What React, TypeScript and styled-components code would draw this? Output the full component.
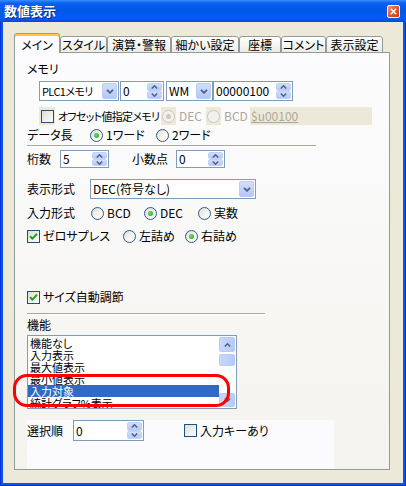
import styled, { createGlobalStyle } from "styled-components";

const GlobalStyle = createGlobalStyle`
  html, body {
    margin: 0;
    padding: 0;
    background: #ece9d8;
  }
  body {
    font-family: "Noto Sans CJK JP", sans-serif;
    font-size: 12px;
    color: #000;
    font-feature-settings: "palt";
  }
`;

const Window = styled.div`
  width: 406px;
  height: 486px;
  box-sizing: border-box;
  display: flex;
  flex-direction: column;
  background: #0757e8;
  border-left: 1px solid #0831d9;
  border-right: 1px solid #0031b5;
  border-bottom: 1px solid #0031b5;
`;

const TitleBar = styled.div`
  height: 22px;
  flex: none;
  margin: 0 -1px;
  display: flex;
  align-items: center;
  justify-content: space-between;
  padding: 0 6px 0 4px;
  background: linear-gradient(
    to bottom,
    #3d8dff 0,
    #0a62f0 3px,
    #0056e8 45%,
    #005cf2 85%,
    #0049d6 100%
  );
`;

const Title = styled.span`
  color: #fff;
  font-weight: bold;
  font-size: 13px;
  line-height: 14px;
  text-shadow: 1px 1px 0 #0a2a8a;
`;

const CloseButton = styled.div`
  width: 13px;
  height: 13px;
  box-sizing: border-box;
  border: 1px solid #fff;
  border-radius: 2px;
  background: linear-gradient(135deg, #f19a7e 0%, #e35a32 45%, #c73a13 100%);
  display: flex;
  align-items: center;
  justify-content: center;
`;

const Body = styled.div`
  flex: 1;
  margin: 0 2px 2px;
  background: #ece9d8;
  padding: 11px 13px 0 11px;
  display: flex;
  flex-direction: column;
`;

const TabBar = styled.div`
  display: flex;
  align-items: flex-end;
  height: 20px;
  margin-bottom: -1px;
  position: relative;
  z-index: 1;
`;

const Tab = styled.div<{ $w: number; $active?: boolean }>`
  width: ${({ $w }) => $w}px;
  height: ${({ $active }) => ($active ? 20 : 17)}px;
  box-sizing: border-box;
  flex: none;
  border: 1px solid #919b9c;
  border-bottom: ${({ $active }) => ($active ? "none" : "1px solid #919b9c")};
  border-top-color: ${({ $active }) => ($active ? "#e68b2c" : "#919b9c")};
  border-radius: 3px 3px 0 0;
  background: ${({ $active }) =>
    $active ? "#fcfcfe" : "linear-gradient(#ffffff, #ecebe6)"};
  box-shadow: ${({ $active }) => ($active ? "inset 0 2px 0 #ffc83c" : "none")};
  display: flex;
  align-items: center;
  justify-content: center;
  padding-top: ${({ $active }) => ($active ? 2 : 0)}px;
  white-space: nowrap;
  line-height: 14px;
`;

const Panel = styled.div`
  width: 376px;
  height: 418px;
  box-sizing: border-box;
  border: 1px solid #919b9c;
  background: linear-gradient(#fcfcfe, #f4f3ee);
  padding-left: 12px;
  display: flex;
  flex-direction: column;
  position: relative;
`;

const Row = styled.div<{ $mt: number; $h: number; $indent?: number }>`
  display: flex;
  align-items: center;
  flex: none;
  margin-top: ${({ $mt }) => $mt}px;
  height: ${({ $h }) => $h}px;
  padding-left: ${({ $indent }) => $indent ?? 0}px;
  line-height: 14px;
  white-space: nowrap;
`;

const Label = styled.span<{ $w?: number; $ml?: number }>`
  flex: none;
  width: ${({ $w }) => ($w ? `${$w}px` : "auto")};
  margin-left: ${({ $ml }) => $ml ?? 0}px;
`;

const Narrow = styled.span<{ $fs?: number; $ls: number }>`
  font-size: ${({ $fs }) => $fs ?? 12}px;
  letter-spacing: ${({ $ls }) => $ls}px;
`;

const Option = styled.span<{ $w?: number; $disabled?: boolean }>`
  flex: none;
  display: flex;
  align-items: center;
  gap: 3px;
  width: ${({ $w }) => ($w ? `${$w}px` : "auto")};
  color: ${({ $disabled }) => ($disabled ? "#aca899" : "#000")};
`;

const RadioMark = styled.span<{ $checked?: boolean; $disabled?: boolean }>`
  width: 13px;
  height: 13px;
  box-sizing: border-box;
  flex: none;
  border-radius: 50%;
  border: 1px solid ${({ $disabled }) => ($disabled ? "#cac8bb" : "#2c5a8e")};
  background: ${({ $disabled }) =>
    $disabled
      ? "#f2f1ec"
      : "linear-gradient(135deg, #dcdad2 0%, #f6f5f1 55%, #ffffff 100%)"};
  display: flex;
  align-items: center;
  justify-content: center;
  &::after {
    content: "";
    display: ${({ $checked }) => ($checked ? "block" : "none")};
    width: 5px;
    height: 5px;
    border-radius: 50%;
    background: ${({ $disabled }) =>
      $disabled ? "#cac8bb" : "radial-gradient(circle at 40% 40%, #6ae26a, #1e9a1e)"};
  }
`;

const CheckMark = styled.span`
  width: 13px;
  height: 13px;
  box-sizing: border-box;
  flex: none;
  border: 1px solid #1c5180;
  background: linear-gradient(135deg, #dcdcd7 0%, #ffffff 100%);
  display: flex;
  align-items: center;
  justify-content: center;
`;

const Plate = styled.span<{ $w: number; $h: number }>`
  flex: none;
  width: ${({ $w }) => $w}px;
  height: ${({ $h }) => $h}px;
  background: #ece9d8;
  display: flex;
  align-items: center;
  justify-content: center;
`;

const AddressPlate = styled(Plate)`
  justify-content: flex-start;
  padding-left: 1px;
  box-sizing: border-box;
  color: #aca899;
  text-decoration: underline;
`;

const Field = styled.div<{ $w: number; $h: number }>`
  flex: none;
  width: ${({ $w }) => $w}px;
  height: ${({ $h }) => $h}px;
  box-sizing: border-box;
  border: 1px solid #7f9db9;
  background: #fff;
  display: flex;
  align-items: stretch;
`;

const FieldText = styled.span`
  flex: 1;
  display: flex;
  align-items: center;
  padding-left: 2px;
  overflow: hidden;
  white-space: nowrap;
`;

const DropButton = styled.span`
  width: 15px;
  margin: 1px;
  box-sizing: border-box;
  border: 1px solid #bccbf2;
  border-radius: 2px;
  background: linear-gradient(#d3defd, #b3c7f8);
  display: flex;
  align-items: center;
  justify-content: center;
`;

const SpinButtons = styled.span`
  width: 15px;
  margin: 1px;
  display: flex;
  flex-direction: column;
`;

const SpinHalf = styled.span`
  flex: 1;
  box-sizing: border-box;
  border: 1px solid #c2d1f5;
  border-radius: 2px;
  background: linear-gradient(#d1ddfc, #b6c9f8);
  display: flex;
  align-items: center;
  justify-content: center;
`;

const Separator = styled.div<{ $mt: number; $w: number }>`
  flex: none;
  margin-top: ${({ $mt }) => $mt}px;
  width: ${({ $w }) => $w}px;
  height: 1px;
  background: #aca899;
  box-shadow: 0 1px 0 #ffffff;
`;

const ListWrap = styled.div`
  position: relative;
  flex: none;
  margin-top: 3px;
  width: 210px;
  height: 74px;
`;

const ListBox = styled.div`
  width: 100%;
  height: 100%;
  box-sizing: border-box;
  border: 1px solid #7f9db9;
  background: #fff;
  display: flex;
`;

const ListItems = styled.div`
  flex: 1;
  overflow: hidden;
  padding-top: 1px;
`;

const ListItem = styled.div<{ $selected?: boolean }>`
  height: 12px;
  line-height: 12px;
  font-size: 11px;
  padding-left: 2px;
  white-space: nowrap;
  background: ${({ $selected }) => ($selected ? "#316ac5" : "transparent")};
  color: ${({ $selected }) => ($selected ? "#fff" : "#000")};
`;

const ScrollBar = styled.div`
  width: 17px;
  display: flex;
  flex-direction: column;
  background: #fdfdfa;
  padding: 1px 1px 1px 0;
  box-sizing: border-box;
`;

const ScrollButton = styled.span<{ $h: number; $mt?: number }>`
  height: ${({ $h }) => $h}px;
  margin-top: ${({ $mt }) => $mt ?? 0}px;
  flex: none;
  box-sizing: border-box;
  border: 1px solid #bccbf2;
  border-radius: 2px;
  background: linear-gradient(90deg, #c9d7fc, #b6c9f8);
  display: flex;
  align-items: center;
  justify-content: center;
`;

const ScrollSpace = styled.span`
  flex: 1;
`;

const Highlight = styled.div`
  position: absolute;
  left: -14px;
  top: 39px;
  width: 217px;
  height: 33px;
  box-sizing: border-box;
  border: 3px solid #ff0000;
  border-radius: 14px;
  pointer-events: none;
`;

const OrderPanel = styled.div`
  flex: none;
  margin-top: 11px;
  width: 307px;
  height: 49px;
  background: #fbfbfd;
`;

const Chevron = () => (
  <svg width="8" height="5" viewBox="0 0 8 5">
    <polyline points="1,0.8 4,3.8 7,0.8" fill="none" stroke="#4d6185" strokeWidth="1.8" />
  </svg>
);

const Arrow = ({ up }: { up?: boolean }) => (
  <svg width="7" height="4" viewBox="0 0 7 4">
    <polyline
      points={up ? "0.8,3.5 3.5,0.8 6.2,3.5" : "0.8,0.5 3.5,3.2 6.2,0.5"}
      fill="none"
      stroke="#4d6185"
      strokeWidth="1.5"
    />
  </svg>
);

const Check = () => (
  <svg width="9" height="9" viewBox="0 0 9 9">
    <polyline points="1,4.2 3.4,6.6 8,1.8" fill="none" stroke="#21a121" strokeWidth="2" />
  </svg>
);

const Combo = ({ w, h, text }: { w: number; h: number; text: React.ReactNode }) => (
  <Field $w={w} $h={h}>
    <FieldText>{text}</FieldText>
    <DropButton>
      <Chevron />
    </DropButton>
  </Field>
);

const Spin = ({ w, h, text }: { w: number; h: number; text: string }) => (
  <Field $w={w} $h={h}>
    <FieldText>{text}</FieldText>
    <SpinButtons>
      <SpinHalf>
        <Arrow up />
      </SpinHalf>
      <SpinHalf>
        <Arrow />
      </SpinHalf>
    </SpinButtons>
  </Field>
);

const CheckBox = ({ checked }: { checked?: boolean }) => (
  <CheckMark>{checked && <Check />}</CheckMark>
);

const tabs = [
  { label: "メイン", w: 46 },
  { label: "スタイル", w: 47 },
  { label: "演算・警報", w: 64 },
  { label: "細かい設定", w: 68 },
  { label: "座標", w: 42 },
  { label: "コメント", w: 45 },
  { label: "表示設定", w: 57 },
];

const functions = [
  "機能なし",
  "入力表示",
  "最大値表示",
  "最小値表示",
  "入力対象",
  "統計グラフ%表示",
];

export default function App() {
  return (
    <>
      <GlobalStyle />
      <Window>
        <TitleBar>
          <Title>数値表示</Title>
          <CloseButton>
            <svg width="7" height="7" viewBox="0 0 7 7">
              <path d="M0.8 0.8 L6.2 6.2 M6.2 0.8 L0.8 6.2" stroke="#fff" strokeWidth="1.6" />
            </svg>
          </CloseButton>
        </TitleBar>
        <Body>
          <TabBar>
            {tabs.map((t, i) => (
              <Tab key={t.label} $w={t.w} $active={i === 0}>
                {t.label}
              </Tab>
            ))}
          </TabBar>
          <Panel>
            <Row $mt={9} $h={14}>
              <Label>メモリ</Label>
            </Row>
            <Row $mt={5} $h={20} $indent={12}>
              <Combo
                w={80}
                h={20}
                text={
                  <Narrow $fs={11} $ls={-0.6}>
                    PLC1メモリ
                  </Narrow>
                }
              />
              <Label $ml={1} />
              <Spin w={44} h={20} text="0" />
              <Label $ml={2} />
              <Combo w={47} h={20} text="WM" />
              <Spin w={80} h={20} text="00000100" />
            </Row>
            <Row $mt={6} $h={18} $indent={12}>
              <Option $w={122}>
                <Plate $w={16} $h={18}>
                  <CheckBox />
                </Plate>
                <Narrow $fs={11} $ls={-0.7}>
                  オフセット値指定メモリ
                </Narrow>
              </Option>
              <Option $w={45} $disabled>
                <Plate $w={15} $h={18}>
                  <RadioMark $checked $disabled />
                </Plate>
                DEC
              </Option>
              <Option $w={44} $disabled>
                <Plate $w={15} $h={18}>
                  <RadioMark $disabled />
                </Plate>
                BCD
              </Option>
              <AddressPlate $w={122} $h={18}>
                $u00100
              </AddressPlate>
            </Row>
            <Row $mt={3} $h={14}>
              <Label $w={63}>データ長</Label>
              <Option $w={66}>
                <RadioMark $checked />
                1ワード
              </Option>
              <Option>
                <RadioMark />
                2ワード
              </Option>
            </Row>
            <Separator $mt={3} $w={289} />
            <Row $mt={4} $h={18}>
              <Label $w={33}>桁数</Label>
              <Spin w={49} h={18} text="5" />
              <Label $w={44} $ml={23}>
                小数点
              </Label>
              <Spin w={49} h={18} text="0" />
            </Row>
            <Row $mt={11} $h={20}>
              <Label $w={63}>表示形式</Label>
              <Combo w={166} h={20} text="DEC(符号なし)" />
            </Row>
            <Row $mt={7} $h={14}>
              <Label $w={64}>入力形式</Label>
              <Option $w={53}>
                <RadioMark />
                BCD
              </Option>
              <Option $w={54}>
                <RadioMark $checked />
                DEC
              </Option>
              <Option>
                <RadioMark />
                実数
              </Option>
            </Row>
            <Row $mt={9} $h={14}>
              <Option $w={96}>
                <CheckBox checked />
                ゼロサプレス
              </Option>
              <Option $w={62}>
                <RadioMark />
                左詰め
              </Option>
              <Option>
                <RadioMark $checked />
                右詰め
              </Option>
            </Row>
            <Row $mt={47} $h={14}>
              <Option>
                <CheckBox checked />
                サイズ自動調節
              </Option>
            </Row>
            <Separator $mt={9} $w={238} />
            <Row $mt={4} $h={14}>
              <Label>機能</Label>
            </Row>
            <ListWrap>
              <ListBox>
                <ListItems>
                  {functions.map((f) => (
                    <ListItem key={f} $selected={f === "入力対象"}>
                      {f}
                    </ListItem>
                  ))}
                </ListItems>
                <ScrollBar>
                  <ScrollButton $h={15}>
                    <Arrow up />
                  </ScrollButton>
                  <ScrollButton $h={12} $mt={2} />
                  <ScrollSpace />
                  <ScrollButton $h={14}>
                    <Arrow />
                  </ScrollButton>
                </ScrollBar>
              </ListBox>
              <Highlight />
            </ListWrap>
            <OrderPanel>
              <Row $mt={0} $h={21}>
                <Label $w={46}>選択順</Label>
                <Spin w={71} h={21} text="0" />
                <Label $w={40} />
                <Option>
                  <CheckBox />
                  入力キーあり
                </Option>
              </Row>
            </OrderPanel>
          </Panel>
        </Body>
      </Window>
    </>
  );
}
